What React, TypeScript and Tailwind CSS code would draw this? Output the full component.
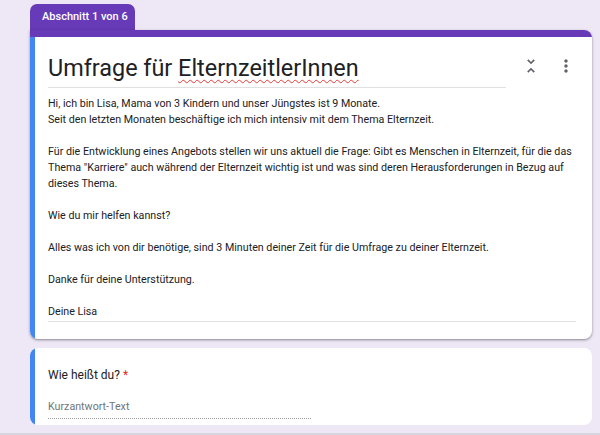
import React from "react";

const lines1 = [
  "Hi, ich bin Lisa, Mama von 3 Kindern und unser Jüngstes ist 9 Monate.",
  "Seit den letzten Monaten beschäftige ich mich intensiv mit dem Thema Elternzeit.",
];
const lines2 = [
  "Für die Entwicklung eines Angebots stellen wir uns aktuell die Frage: Gibt es Menschen in Elternzeit, für die das",
  'Thema "Karriere" auch während der Elternzeit wichtig ist und was sind deren Herausforderungen in Bezug auf',
  "dieses Thema.",
];

function Para({ lines }: { lines: string[] }) {
  return (
    <div>
      {lines.map((l, i) => (
        <div key={i} className="whitespace-nowrap">
          {l}
        </div>
      ))}
    </div>
  );
}

export default function App() {
  return (
    <div className="w-[600px] h-[435px] bg-[#ede7f6] overflow-hidden flex flex-col font-['Roboto',_'Liberation_Sans',_sans-serif] text-[#202124]">
      <div className="pl-[30px] pr-[8px] pt-[4px]">
        <div className="w-[105px] h-[26px] bg-[#673ab7] rounded-t-[7px] text-white text-[11px] font-medium pl-[12px] flex items-center">
          Abschnitt 1 von 6
        </div>
        <div className="bg-white rounded-b-[8px] rounded-tr-[8px] overflow-hidden shadow-[0_1px_2px_rgba(0,0,0,0.3),0_1px_3px_1px_rgba(0,0,0,0.1)]">
          <div className="h-[7px] bg-[#673ab7]" />
          <div className="border-l-[5px] border-[#4285f4] pl-[13px] pr-[16px] pt-[15px] pb-[17px]">
            <div className="flex items-start">
              <div className="w-[464px] border-b border-[#e0e0e0] pb-[3px]">
                <div className="text-[23.4px] leading-[32px] whitespace-nowrap">
                  Umfrage für{" "}
                  <span className="underline decoration-wavy decoration-[#e53935] decoration-1 underline-offset-[3px]">
                    ElternzeitlerInnen
                  </span>
                </div>
              </div>
              <div className="flex items-center ml-[15px] mt-[4px] gap-[15px]">
                <svg width="20" height="20" viewBox="0 0 24 24" className="text-[#5f6368]">
                  <path d="M7.41 18.59 8.83 20 12 16.83 15.17 20l1.41-1.41L12 14l-4.59 4.59zm9.18-13.18L15.17 4 12 7.17 8.83 4 7.41 5.41 12 10l4.59-4.59z" fill="currentColor" />
                </svg>
                <svg width="20" height="20" viewBox="0 0 24 24" className="text-[#5f6368]">
                  <path d="M12 8c1.1 0 2-.9 2-2s-.9-2-2-2-2 .9-2 2 .9 2 2 2zm0 2c-1.1 0-2 .9-2 2s.9 2 2 2 2-.9 2-2-.9-2-2-2zm0 6c-1.1 0-2 .9-2 2s.9 2 2 2 2-.9 2-2-.9-2-2-2z" fill="currentColor" />
                </svg>
              </div>
            </div>
            <div className="mt-[8px] text-[10.7px] leading-[16px] text-[#202124] flex flex-col gap-[16px] border-b border-[#e0e0e0] pb-[1px] w-[528px]">
              <Para lines={lines1} />
              <Para lines={lines2} />
              <div>Wie du mir helfen kannst?</div>
              <div className="whitespace-nowrap">
                Alles was ich von dir benötige, sind 3 Minuten deiner Zeit für die Umfrage zu deiner Elternzeit.
              </div>
              <div>Danke für deine Unterstützung.</div>
              <div>Deine Lisa</div>
            </div>
          </div>
        </div>
        <div className="mt-[9px] bg-white rounded-[8px] overflow-hidden h-[77px]">
          <div className="border-l-[5px] border-[#4285f4] h-full pl-[13px] pt-[19px]">
            <div className="text-[12px] leading-[16px] whitespace-nowrap">
              Wie heißt du? <span className="text-[#d93025]">*</span>
            </div>
            <div className="mt-[16px] w-[263px] border-b border-dotted border-[#9e9e9e] pb-[3px] text-[10.7px] leading-[16px] text-[#70757a]">
              Kurzantwort-Text
            </div>
          </div>
        </div>
      </div>
      <div className="mt-auto h-[2px] bg-[#d8d4df]" />
    </div>
  );
}
